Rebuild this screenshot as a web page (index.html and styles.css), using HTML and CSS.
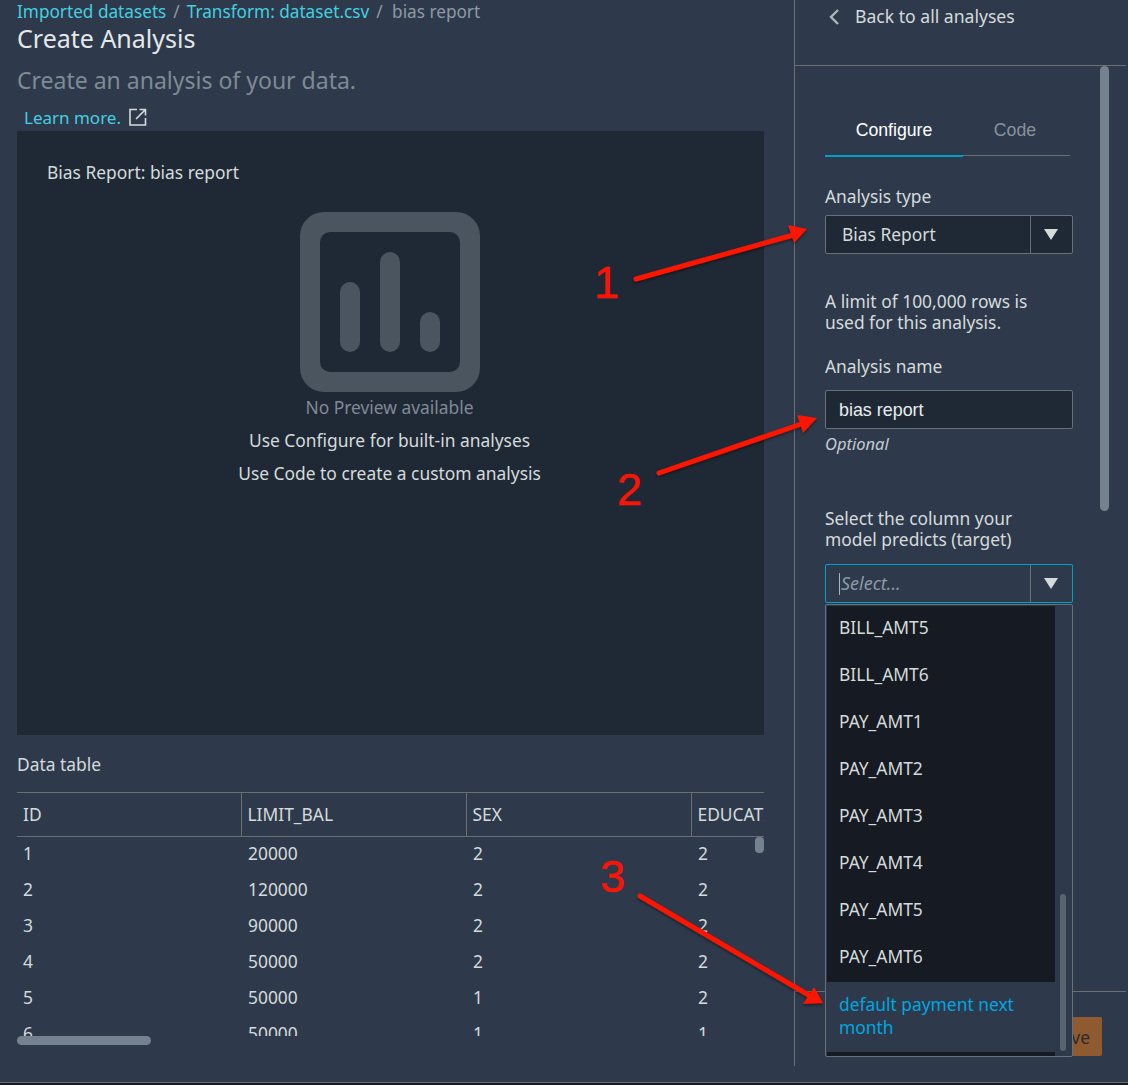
FILE: index.html
```html
<!DOCTYPE html>
<html lang="en">
<head>
  <meta charset="UTF-8">
  <title>Create Analysis</title>
  <link rel="stylesheet" href="styles.css">
</head>
<body>

  <div class="page">
    <main class="main">
      <nav class="crumbs">
        <a href="#">Imported datasets</a> <span class="sep">/</span>
        <a href="#">Transform: dataset.csv</a> <span class="sep">/</span>
        <span class="sep">bias report</span>
      </nav>
      <h1>Create Analysis</h1>
      <p class="sub">Create an analysis of your data.</p>
      <a class="learn" href="#">Learn more.
        <svg width="18" height="18" viewBox="0 0 18 18" fill="none" stroke="#d5dbdb" stroke-width="1.6">
          <path d="M8 1.5H1v15.500h15.500V10"/>
          <path d="M7 11 16 2M10.500 1.500h6v6"/>
        </svg>
      </a>

      <section class="preview">
        <h2>Bias Report: bias report</h2>
        <div class="empty">
          <svg class="empty-icon" width="180" height="180" viewBox="0 0 180 180">
            <path fill="#4a5560" fill-rule="evenodd" d="M24 0h132a24 24 0 0 1 24 24v132a24 24 0 0 1-24 24H24a24 24 0 0 1-24-24V24A24 24 0 0 1 24 0ZM30 20a10 10 0 0 0-10 10v120a10 10 0 0 0 10 10h120a10 10 0 0 0 10-10V30a10 10 0 0 0-10-10Z"/>
            <rect x="40" y="70" width="20" height="70" rx="10" fill="#4a5560"/>
            <rect x="80" y="40" width="20" height="100" rx="10" fill="#4a5560"/>
            <rect x="120" y="100" width="20" height="40" rx="10" fill="#4a5560"/>
          </svg>
          <p class="empty-title">No Preview available</p>
          <p class="empty-line">Use Configure for built-in analyses</p>
          <p class="empty-line">Use Code to create a custom analysis</p>
        </div>
      </section>

      <h3 class="table-title">Data table</h3>
      <div class="table-wrap">
        <table>
          <thead>
            <tr><th>ID</th><th>LIMIT_BAL</th><th>SEX</th><th>EDUCATION</th></tr>
          </thead>
          <tbody>
            <tr><td>1</td><td>20000</td><td>2</td><td>2</td></tr>
            <tr><td>2</td><td>120000</td><td>2</td><td>2</td></tr>
            <tr><td>3</td><td>90000</td><td>2</td><td>2</td></tr>
            <tr><td>4</td><td>50000</td><td>2</td><td>2</td></tr>
            <tr><td>5</td><td>50000</td><td>1</td><td>2</td></tr>
            <tr><td>6</td><td>50000</td><td>1</td><td>1</td></tr>
          </tbody>
        </table>
        <div class="thumb-v"></div>
      </div>
      <div class="thumb-h"></div>
    </main>

    <aside class="panel">
      <header class="panel-head">
        <svg width="12" height="18" viewBox="0 0 12 18" fill="none" stroke="#aab7b8" stroke-width="2.400">
          <path d="M10 2 3 9l7 7"/>
        </svg>
        <span>Back to all analyses</span>
      </header>

      <div class="panel-body">
        <div class="tabs">
          <span class="tab active">Configure</span>
          <span class="tab">Code</span>
        </div>

        <label class="field-label first">Analysis type</label>
        <div class="select filled">
          <span class="select-text">Bias Report</span>
          <span class="select-arrow"><i class="tri"></i></span>
        </div>

        <p class="note">A limit of 100,000 rows is used for this analysis.</p>

        <label class="field-label name">Analysis name</label>
        <div class="select filled name-input"><span class="select-text input-text">bias report</span></div>
        <p class="hint">Optional</p>

        <label class="field-label target">Select the column your model predicts (target)</label>
        <div class="select focus">
          <span class="caret"></span>
          <span class="select-text placeholder">Select...</span>
          <span class="select-arrow"><i class="tri"></i></span>
        </div>

        <div class="scroll-thumb"></div>
      </div>

      <footer class="panel-foot">
        <button class="save">Save</button>
      </footer>

      <ul class="menu">
        <li>BILL_AMT5</li>
        <li>BILL_AMT6</li>
        <li>PAY_AMT1</li>
        <li>PAY_AMT2</li>
        <li>PAY_AMT3</li>
        <li>PAY_AMT4</li>
        <li>PAY_AMT5</li>
        <li>PAY_AMT6</li>
        <li class="picked">default payment next month</li>
        <li class="menu-end"></li>
      </ul>
      <div class="menu-thumb"></div>
    </aside>
  </div>
  <div class="page-end"></div>

  <!-- red annotations drawn on top of the screenshot -->
  <svg class="marks" width="1128" height="1085" viewBox="0 0 1128 1085">
    <defs>
      <filter id="shadow" x="-10%" y="-10%" width="120%" height="130%">
        <feDropShadow dx="0" dy="1.500" stdDeviation="1.500" flood-color="#000" flood-opacity="0.500"/>
      </filter>
    </defs>
    <g filter="url(#shadow)" stroke="#fa1405" stroke-width="5" stroke-linecap="round" fill="#fa1405">
      <path d="M636 279 797 234"/>
      <path stroke="none" d="M807 229 788 225 794 243Z"/>
      <path d="M659 473 807 422"/>
      <path stroke="none" d="M817 418 797 415 803 433Z"/>
      <path d="M640 896 812 997"/>
      <path stroke="none" d="M823 1003 814 987 803 1004Z"/>
    </g>
    <text class="mark-num" x="594" y="298">1</text>
    <text class="mark-num" x="617" y="505">2</text>
    <text class="mark-num" x="600" y="892">3</text>
  </svg>

</body>
</html>
```

FILE: styles.css
```css
html, body {
  margin: 0;
  height: 1085px;
  overflow: hidden;
}

body {
  font-family: "Noto Sans", sans-serif;
  background-color: #2e3a4b;
  color: #d5dbdb;
  font-size: 17.4px;
  position: relative;
}

.page {
  display: flex;
  height: 1066px;
}

.main {
  width: 747px;
  padding: 0 30px 0 17px;
  flex: none;
}

.crumbs {
  padding-top: 1px;
  font-size: 17.2px;
  line-height: 22px;
  white-space: nowrap;
  height: 21px;
}

.crumbs a, .learn {
  color: #44cfe0;
  text-decoration: none;
}

.sep {
  color: #8d99a5;
  margin: 0 2.500px;
}

h1 {
  margin: 0;
  font-size: 25px;
  font-weight: 400;
  line-height: 32px;
  color: #e4e8e8;
}

.sub {
  margin: 10px 0 0;
  font-size: 23px;
  line-height: 32px;
  color: #7f8a95;
}

.learn {
  display: flex;
  align-items: center;
  gap: 8px;
  height: 24px;
  margin: 9px 0 0 7px;
  font-size: 17px;
}

.preview {
  background-color: #1f2935;
  height: 604px;
  padding-top: 30px;
  box-sizing: border-box;
  margin-top: 2px;
}

.preview h2 {
  margin: 0 0 0 30px;
  font-size: 17.4px;
  font-weight: 400;
  line-height: 22px;
}

.empty {
  display: flex;
  flex-direction: column;
  align-items: center;
  margin-top: 29px;
  padding-right: 2px;
}

.empty p {
  margin: 0;
}

.empty-icon {
  display: block;
}

.empty-title {
  color: #7f8a95;
  line-height: 30px;
  margin-bottom: 2px !important;
}

.empty-line {
  line-height: 33px;
}

.table-title {
  margin: 18px 0 17px;
  font-size: 17.4px;
  font-weight: 400;
  line-height: 22px;
}

.table-wrap {
  position: relative;
  height: 243px;
  overflow: hidden;
  border-top: 1px solid #6b6f72;
}

table {
  border-collapse: collapse;
  table-layout: fixed;
  width: 899px;
}

th, td {
  width: 225px;
  padding: 0 6px;
  text-align: left;
  font-weight: 400;
  font-size: 17.4px;
  box-sizing: border-box;
  white-space: nowrap;
}

th:first-child, td:first-child {
  width: 224px;
}

th {
  height: 43px;
  border-bottom: 1px solid #6b6f72;
  border-left: 1px solid #6b6f72;
}

th:first-child {
  border-left: none;
}

td {
  height: 36px;
  padding-bottom: 2px;
}

td:not(:first-child) {
  padding-left: 7px;
}

.thumb-v {
  position: absolute;
  right: 0;
  top: 44px;
  width: 9px;
  height: 16px;
  border-radius: 4px;
  background-color: #74828f;
}

.thumb-h {
  width: 134px;
  height: 9px;
  border-radius: 5px;
  background-color: #74828f;
}

.panel {
  position: relative;
  flex: 1;
  display: flex;
  flex-direction: column;
  border-left: 1px solid #6b6f72;
  margin-right: 2px;
}

.panel-head {
  display: flex;
  align-items: flex-start;
  gap: 15px;
  height: 66px;
  padding: 5px 0 0 33px;
  box-sizing: border-box;
  border-bottom: 1px solid #6b6f72;
  line-height: 22px;
  font-size: 17.600px;
  flex: none;
}

.panel-head svg {
  margin-top: 3px;
}

.panel-body {
  flex: 1;
  position: relative;
  padding-left: 30px;
  overflow: hidden;
}

.scroll-thumb {
  position: absolute;
  left: 305px;
  top: 0;
  width: 9px;
  height: 445px;
  border-radius: 5px;
  background-color: #74828f;
}

.tabs {
  display: flex;
  width: 245px;
  margin-top: 46px;
  height: 43px;
  border-bottom: 1px solid #6b6f72;
  font-family: "Liberation Sans", Arial, sans-serif;
  font-size: 17.7px;
}

.tab {
  width: 104px;
  text-align: center;
  color: #87929c;
  line-height: 37px;
}

.tab.active {
  width: 138px;
  color: #fff;
  height: 43px;
  border-bottom: 2px solid #00a1c9;
}

.field-label {
  display: block;
  line-height: 21px;
  width: 225px;
}

.field-label.first {
  margin-top: 30px;
}

.field-label.name {
  margin-top: 23px;
}

.field-label.target {
  margin-top: 54px;
}

.select {
  display: flex;
  align-items: center;
  width: 248px;
  height: 39px;
  box-sizing: border-box;
  border: 1px solid #687078;
  border-radius: 2px;
  margin-top: 8px;
}

.select.filled {
  background-color: #1f2935;
}

.select.name-input {
  margin-top: 13px;
}

.select.focus {
  border-color: #00a1c9;
  margin-top: 14px;
}

.select-text {
  flex: 1;
  padding-left: 16px;
  padding-bottom: 2px;
}

.input-text {
  padding-left: 13px;
  padding-bottom: 0;
  padding-top: 1px;
  color: #eaeded;
  font-family: "Liberation Sans", Arial, sans-serif;
  font-size: 17.900px;
}

.placeholder {
  padding-left: 1px;
  padding-bottom: 2px;
  font-style: italic;
  font-size: 18px;
  color: #8d99a5;
}

.caret {
  width: 1px;
  height: 22px;
  margin-left: 13px;
  background-color: #aab7b8;
}

.select-arrow {
  width: 42px;
  height: 100%;
  padding-right: 1px;
  display: flex;
  align-items: center;
  justify-content: center;
  border-left: 1px solid #687078;
  box-sizing: border-box;
}

.tri {
  width: 0;
  height: 0;
  border-left: 7px solid transparent;
  border-right: 7px solid transparent;
  border-top: 11px solid #d5dbdb;
}

.note {
  margin: 37px 0 0;
  width: 225px;
  line-height: 21px;
}

.hint {
  margin: 4px 0 0;
  font-style: italic;
  font-size: 16.500px;
  line-height: 21px;
  color: #c4cbd0;
}

.panel-foot {
  height: 75px;
  box-sizing: border-box;
  flex: none;
  border-top: 1px solid #6b6f72;
  padding: 25px 24px 0 0;
  display: flex;
  justify-content: flex-end;
  align-items: flex-start;
}

.save {
  width: 62px;
  height: 39px;
  border: none;
  border-radius: 2px;
  background-color: #8f5a30;
  color: #2b2a2c;
  font-family: inherit;
  font-size: 17.4px;
}

.menu {
  position: absolute;
  left: 30px;
  top: 604px;
  width: 248px;
  height: 453px;
  margin: 0;
  padding: 1px 17px 0 1px;
  box-sizing: border-box;
  list-style: none;
  border: 1px solid #687078;
  border-radius: 2px;
  background-color: #2e3a4b;
  overflow: hidden;
}

.menu li {
  height: 47px;
  box-sizing: border-box;
  padding: 0 12px;
  line-height: 43px;
  background-color: #161a22;
}

.menu li.picked {
  height: 70px;
  padding-top: 11px;
  line-height: 23px;
  background-color: #2e3a4b;
  color: #00a6e0;
}

.menu li.menu-end {
  height: 7px;
}

.menu-thumb {
  position: absolute;
  left: 265px;
  top: 894px;
  width: 6px;
  height: 157px;
  border-radius: 3px;
  background-color: #596470;
}

.page-end {
  height: 16px;
}

.page-end::after {
  content: "";
  display: block;
  position: absolute;
  left: 0;
  right: 0;
  top: 1082px;
  height: 3px;
  background-color: #16191f;
  border-top: 1px solid #6b6f72;
}

.marks {
  position: absolute;
  left: 0;
  top: 0;
  pointer-events: none;
}

.mark-num {
  font-family: "Liberation Sans", Arial, sans-serif;
  font-size: 45px;
  fill: #fa1405;
  stroke: #fa1405;
  stroke-width: 0.5px;
}
```
